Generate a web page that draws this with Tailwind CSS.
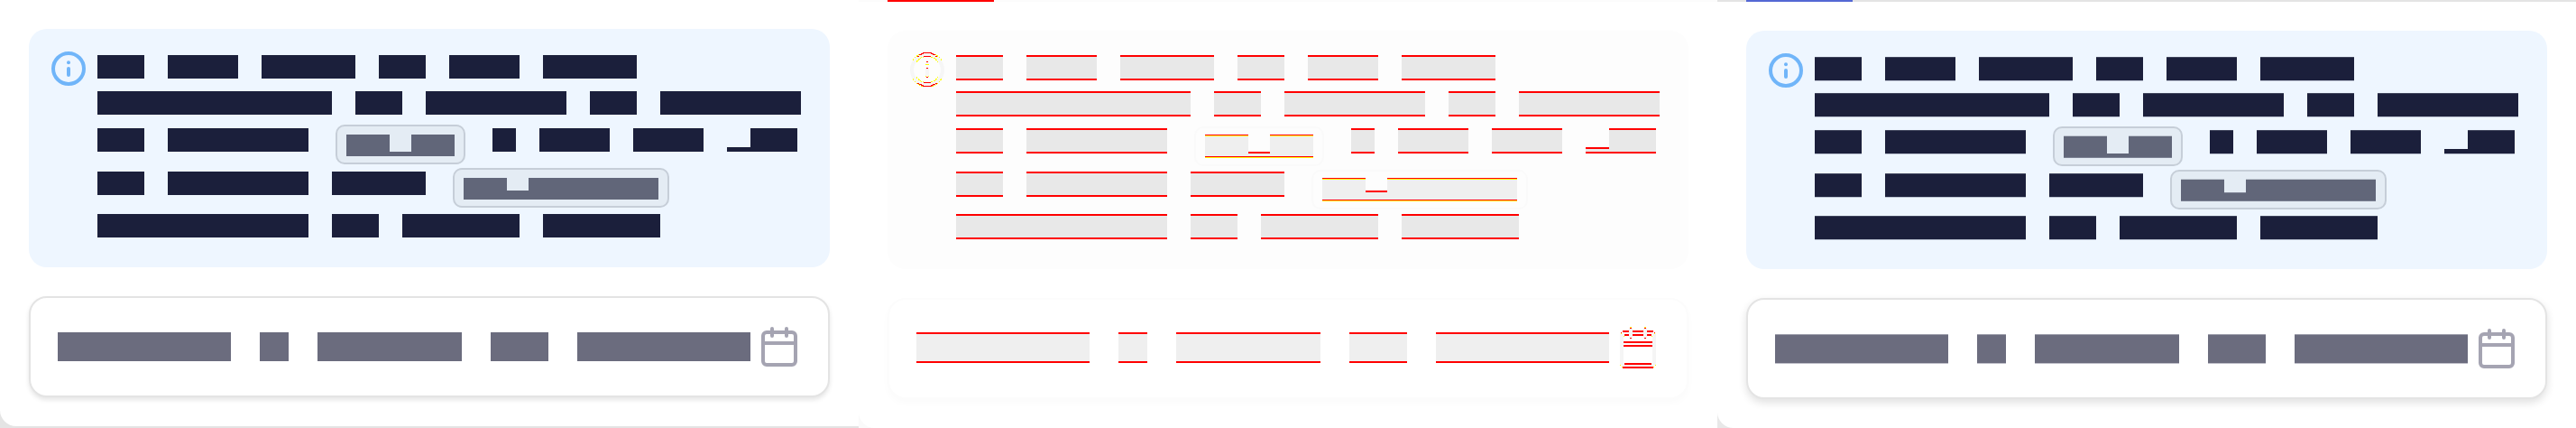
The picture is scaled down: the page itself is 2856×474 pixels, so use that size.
<!DOCTYPE html>
<html lang="en">
<head>
<meta charset="utf-8">
<meta name="viewport" content="width=device-width, initial-scale=1">
<title>Date field: visual comparison</title>
<script src="https://cdn.jsdelivr.net/npm/@tailwindcss/browser@4"></script>
</head>
<body class="bg-white font-['Liberation_Sans',sans-serif]">
<main class="grid grid-cols-3">

  <section data-panel="before" aria-label="Before" class="bg-[#e4e4e4] pb-[2px]">
    <div class="rounded-bl-[18px] bg-white p-8">
      <div class="flex gap-3 rounded-[20px] bg-[#eef6ff] p-6">
        <svg class="size-10 shrink-0" viewBox="0 0 40 40" fill="none" stroke="#70b5f9" stroke-width="4" stroke-linecap="round" aria-hidden="true"><circle cx="20" cy="20" r="17"/><path d="M20 20v7"/><circle cx="20" cy="13.3" r="2" fill="#70b5f9" stroke="none"/></svg>
        <div data-lines></div>
      </div>
      <button type="button" aria-label="Choose date" class="mt-8 flex h-28 w-full items-center justify-between rounded-[20px] border-2 border-[#e4e4e4] bg-white px-[30px] shadow-[0_3px_5px_rgba(0,0,0,0.1)]">
        <span data-placeholder class="flex gap-8"></span>
        <svg class="size-12 shrink-0" viewBox="0 0 48 48" fill="none" stroke="#a5a4b2" stroke-width="4" stroke-linecap="round" aria-hidden="true"><rect x="6" y="8" width="36" height="36" rx="4"/><path d="M16 4v8M32 4v8"/><path d="M6 20h36" stroke-linecap="butt"/></svg>
      </button>
    </div>
  </section>

  <section data-panel="diff" aria-label="Difference" class="bg-[#fafafa]">
    <div class="h-[2px] bg-[#fcfcfc] px-8"><div class="h-[2px] w-[118px] bg-[#ff0000]"></div></div>
    <div class="rounded-bl-[18px] bg-white p-8">
      <div class="flex gap-3 rounded-[20px] bg-[#fdfdfd] p-6">
        <svg class="size-10 shrink-0" viewBox="0 0 40 40" fill="none" aria-hidden="true">
          <circle cx="20" cy="19.5" r="17" stroke="#f6f6f6" stroke-width="4"/>
          <path d="M20 17v9M20 11v3" stroke="#f6f6f6" stroke-width="4"/>
          <g shape-rendering="crispEdges">
            <path d="M4 9q5-8.500 16-8.500t16 8.500M4 29q5 9 16 9t16-9M8 11q4-6.500 12-6.500t12 6.500M8 27q4 6.500 12 6.500t12-6.500" stroke="#ffff00" stroke-dasharray="2 1"/>
            <path d="M9 4.500h2M11 2.500h3M13 1.500h3M15 .500h10M24 1.500h3M26 2.500h3M29 4.500h2M9 34.500h2M11 35.500h3M13 36.500h3M15 37.500h10M24 36.500h3M26 35.500h3M29 34.500h2M16 4.500h8M16 33.500h8M19 10.500h2M19 17.500h2M19 27.500h2" stroke="#ff0000"/>
            <path d="M18 13.500h4M18 26.500h1M21 26.500h1" stroke="#ffff00"/>
          </g>
        </svg>
        <div data-lines></div>
      </div>
      <button type="button" aria-label="Choose date (difference)" class="mt-8 flex h-28 w-full items-center justify-between rounded-[20px] border-2 border-[#fcfcfc] bg-white px-[30px] shadow-[0_4px_8px_rgba(0,0,0,0.02)]">
        <span data-placeholder class="flex gap-8"></span>
        <svg class="size-12 shrink-0" viewBox="0 0 48 48" fill="none" shape-rendering="crispEdges" aria-hidden="true">
          <path d="M6 7v36M42 7v36M16 2v10M32 2v10M7 43h34" stroke="#f5f5f5" stroke-width="4"/>
          <path d="M7 5h7M18 5h12M34 5h7M9 9h5M18 9h12M34 9h5M8 17h32M8 21h32M9 41h30M7 45h34" stroke="#ff0000" stroke-width="2"/>
          <path d="M15 1.500h2M31 1.500h2M15 12.500h2M31 12.500h2M5 6.500h1M42 6.500h1" stroke="#ff0000"/>
          <path d="M15 .500h2M31 .500h2M5 7.500h1M42 7.500h1M8 10.500h1M39 10.500h1M4 42.500h1M43 42.500h1M6 44.500h1M41 44.500h1" stroke="#ffff00"/>
        </svg>
      </button>
    </div>
  </section>

  <section data-panel="after" aria-label="After" class="bg-[#e8e8e8]">
    <div class="h-[2px] bg-[#e4e4e4] px-8"><div class="h-[2px] w-[118px] bg-[#5468d4]"></div></div>
    <div class="rounded-bl-[18px] bg-white p-8">
      <div class="flex gap-3 rounded-[20px] bg-[#eef6ff] p-6">
        <svg class="size-10 shrink-0" viewBox="0 0 40 40" fill="none" stroke="#70b5f9" stroke-width="4" stroke-linecap="round" aria-hidden="true"><circle cx="20" cy="20" r="17"/><path d="M20 20v7"/><circle cx="20" cy="13.3" r="2" fill="#70b5f9" stroke="none"/></svg>
        <div data-lines></div>
      </div>
      <button type="button" aria-label="Choose date (after)" class="mt-8 flex h-28 w-full items-center justify-between rounded-[20px] border-2 border-[#e4e4e4] bg-white px-[30px] shadow-[0_4px_10px_rgba(0,0,0,0.12)]">
        <span data-placeholder class="flex gap-8"></span>
        <svg class="size-12 shrink-0" viewBox="0 0 48 48" fill="none" stroke="#a5a4b2" stroke-width="4" stroke-linecap="round" aria-hidden="true"><rect x="6" y="8" width="36" height="36" rx="4"/><path d="M16 4v8M32 4v8"/><path d="M6 20h36" stroke-linecap="butt"/></svg>
      </button>
    </div>
  </section>
</main>

<script>
// Each line is a list of word widths; "low" is a word with a short first glyph, "code" a chip.
const lines = [
  [52, 78, 104, 52, 78, 104],
  [260, 52, 156, 52, 156],
  [52, 156, { code: [48, 24, 48], notch: 'notchA' }, 26, 78, 78, { low: [26, 52] }],
  [52, 156, 104, { code: [48, 24, 144], notch: 'notchB' }],
  [234, 52, 130, 130],
];
const placeholder = [192, 32, 160, 64, 192];

const themes = {
  before: {
    line: 'flex h-10 items-start gap-[26px] pt-[5px]',
    tall: 'flex h-12 items-start gap-[26px] pt-[2px]',
    nudge: 'mt-1',
    word: 'h-[26px] bg-[#1b1f3b]',
    low: 'h-[5px] bg-[#1b1f3b]',
    chip: 'mx-1 flex h-11 items-start rounded-[10px] border-2 border-[#c6ced8] bg-[#e4ecf4] px-[10px] pt-[9px]',
    code: 'h-6 bg-[#616679]',
    notchA: 'h-[5px] bg-[#616679]',
    notchB: 'h-[10px] bg-[#616679]',
    hint: 'h-8 bg-[#6b6c7e]',
  },
  diff: {
    line: 'flex h-10 items-start gap-[26px] pt-[3px]',
    tall: 'flex h-12 items-start gap-[26px] pt-[2px]',
    nudge: 'mt-[2px]',
    word: 'h-7 border-y-2 border-[#ff0000] bg-[#e8e8e8]',
    low: 'h-[7px] border-y-2 border-[#ff0000] bg-[#e8e8e8]',
    chip: 'mx-1 flex h-11 items-start rounded-[10px] border-2 border-[#fafafa] bg-[#fdfdfd] px-[10px] pt-[7px]',
    code: 'h-[26px] border-t border-b border-t-[#ff0000] border-b-[#ffff00] bg-[#efefef] shadow-[inset_0_1px_#ffff00,inset_0_-1px_#ff0000]',
    notchA: 'h-[7px] border-t-2 border-b border-t-[#ff0000] border-b-[#ffff00] bg-[#efefef] shadow-[inset_0_-1px_#ff0000]',
    notchB: 'h-3 border-t-2 border-b border-t-[#ff0000] border-b-[#ffff00] bg-[#efefef] shadow-[inset_0_-1px_#ff0000]',
    hint: 'mb-[2px] h-[34px] border-y-2 border-[#ff0000] bg-[#efefef]',
  },
  after: {
    line: 'flex h-10 items-start gap-[26px] pt-[5px]',
    tall: 'flex h-12 items-start gap-[26px] pt-[2px]',
    nudge: 'mt-1',
    word: 'h-[27px] border-t border-b border-t-[#40455c] border-b-[#bcc3d2] bg-[#1b1f3b]',
    low: 'h-[6px] border-b border-b-[#bcc3d2] bg-[#1b1f3b]',
    chip: 'mx-1 flex h-11 items-start rounded-[10px] border-2 border-[#c6ced8] bg-[#e4ecf4] px-[10px] pt-[8px]',
    code: 'h-[25px] border-t border-b border-t-[#c0c7d1] border-b-[#7c8193] bg-[#616679]',
    notchA: 'h-[5px] border-b border-b-[#7c8193] bg-[#616679]',
    notchB: 'h-[10px] border-t border-b border-[#7c8193] bg-[#616679]',
    hint: 'mt-px h-[33px] border-t border-b border-t-[#9c9daa] border-b-[#c0c0ca] bg-[#6b6c7e]',
  },
};

function block(tag, className, width) {
  const el = document.createElement(tag);
  el.className = className;
  if (width) el.style.width = width + 'px';
  return el;
}

document.querySelectorAll('[data-panel]').forEach((panel) => {
  const t = themes[panel.dataset.panel];
  const holder = panel.querySelector('[data-lines]');
  lines.forEach((items) => {
    const tall = items.some((item) => item.code);
    const row = block('div', tall ? t.tall : t.line);
    items.forEach((item) => {
      if (item.code) {
        const chip = block('div', t.chip);
        const run = block('div', 'flex items-end');
        item.code.forEach((w, i) => run.append(block('div', i === 1 ? t[item.notch] : t.code, w)));
        chip.append(run);
        row.append(chip);
        return;
      }
      const word = block('div', 'flex items-end');
      if (tall) word.classList.add(t.nudge);
      if (item.low) {
        word.append(block('div', t.low, item.low[0]), block('div', t.word, item.low[1]));
      } else {
        word.append(block('div', t.word, item));
      }
      row.append(word);
    });
    holder.append(row);
  });
  const hint = panel.querySelector('[data-placeholder]');
  placeholder.forEach((w) => hint.append(block('span', t.hint, w)));
});
</script>
</body>
</html>
